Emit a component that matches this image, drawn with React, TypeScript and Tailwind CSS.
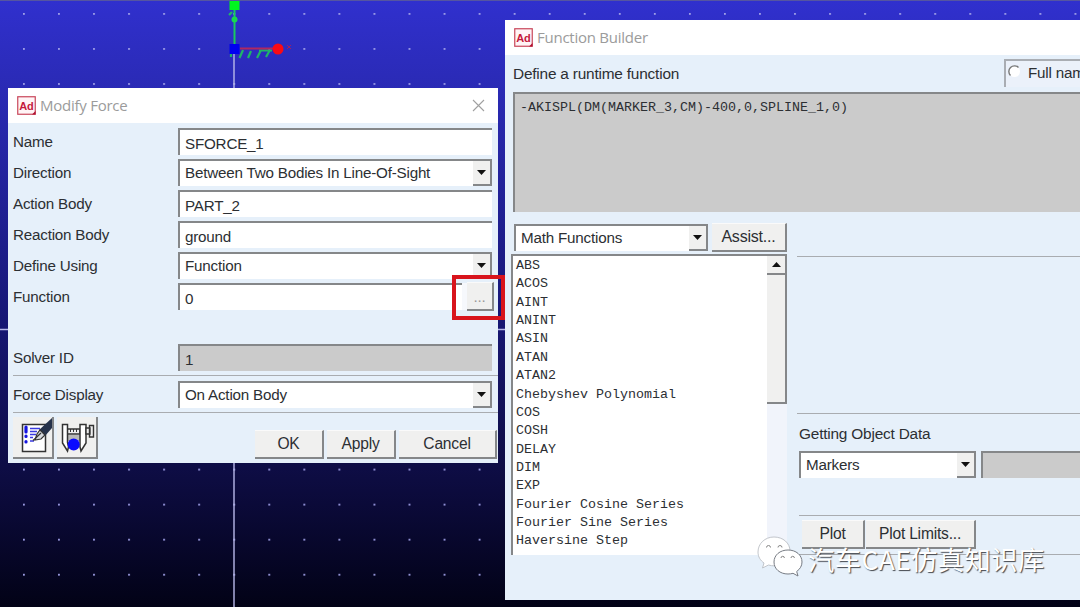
import React, { useState } from 'react';

const mathFunctions = [
  'ABS',
  'ACOS',
  'AINT',
  'ANINT',
  'ASIN',
  'ATAN',
  'ATAN2',
  'Chebyshev Polynomial',
  'COS',
  'COSH',
  'DELAY',
  'DIM',
  'EXP',
  'Fourier Cosine Series',
  'Fourier Sine Series',
  'Haversine Step',
];

function AdamsIcon() {
  return (
    <svg className="w-[19px] h-[19px] shrink-0" viewBox="0 0 19 19">
      <rect x="0.75" y="0.75" width="17.5" height="17.5" fill="#fff4f6" stroke="#c8465a" strokeWidth="1.2" />
      <path d="M18.5 15v3.5H15z" fill="#b01030" />
      <text x="9.3" y="14" textAnchor="middle" fontSize="11" fontWeight="700" fill="#c4183c" fontFamily="Liberation Sans, sans-serif">
        Ad
      </text>
    </svg>
  );
}

function TitleBar({ title, closable }: { title: string; closable?: boolean }) {
  return (
    <div className="h-[35px] shrink-0 bg-white flex items-center pl-[9px] pr-[13px]">
      <AdamsIcon />
      <span className="ml-[4px] text-[15px] tracking-[-0.25px] leading-none text-[#9b9b9b] font-['Open_Sans',sans-serif] whitespace-nowrap">{title}</span>
      {closable && (
        <svg className="ml-auto w-[13px] h-[13px]" viewBox="0 0 13 13">
          <path d="M1 1l11 11M12 1L1 12" stroke="#a0a0a0" strokeWidth="1.1" />
        </svg>
      )}
    </div>
  );
}

function Arrow({ up }: { up?: boolean }) {
  return (
    <svg className="w-[9px] h-[5px]" viewBox="0 0 9 5">
      <path d={up ? 'M0 5L4.5 0L9 5z' : 'M0 0L4.5 5L9 0z'} fill="#111" />
    </svg>
  );
}

function SelectBox({ value, className }: { value: string; className: string }) {
  return (
    <div className={`h-[27px] bg-white border-t-2 border-l-2 border-r-2 border-[#858789] flex ${className}`}>
      <span className="flex-1 pl-[5px] leading-[24px] whitespace-nowrap">{value}</span>
      <span className="w-[17px] h-[25px] bg-[#f0f0ef] border-b-2 border-[#858789] flex items-center justify-center pb-[1px]">
        <Arrow />
      </span>
    </div>
  );
}

function TextBox({ value, className }: { value: string; className: string }) {
  return (
    <div className={`h-[27px] border-t-2 border-l-2 border-[#858789] pl-[5px] leading-[28px] ${className}`}>
      {value}
    </div>
  );
}

function PushButton({ label, className }: { label: string; className: string }) {
  return (
    <button
      className={`h-[29px] bg-[#f0f0ef] border-t border-t-[#fafafa] border-r-2 border-b-2 border-r-[#858789] border-b-[#858789] text-center leading-[26px] whitespace-nowrap ${className}`}
    >
      {label}
    </button>
  );
}

function Row({ label, children }: { label: string; children: React.ReactNode }) {
  return (
    <div className="flex h-[31px] pl-[5px]">
      <span className="w-[165px] leading-[28px] whitespace-nowrap">{label}</span>
      {children}
    </div>
  );
}

function ModifyForce() {
  return (
    <div className="absolute left-[8px] top-[88px] w-[490px] h-[375px] bg-[#e6f0fa] flex flex-col">
      <TitleBar title="Modify Force" closable />
      <div className="pt-[5px]">
        <Row label="Name">
          <TextBox value="SFORCE_1" className="w-[314px] bg-white" />
        </Row>
        <Row label="Direction">
          <SelectBox value="Between Two Bodies In Line-Of-Sight" className="w-[314px]" />
        </Row>
        <Row label="Action Body">
          <TextBox value="PART_2" className="w-[314px] bg-white" />
        </Row>
        <Row label="Reaction Body">
          <TextBox value="ground" className="w-[314px] bg-white" />
        </Row>
        <Row label="Define Using">
          <SelectBox value="Function" className="w-[314px]" />
        </Row>
        <Row label="Function">
          <TextBox value="0" className="w-[284px] bg-white" />
          <div className="w-[5px] h-[27px] bg-[#f6f8fc]" />
          <PushButton label="..." className="w-[27px] -mt-[1px] leading-[28px] text-[#999]" />
        </Row>
      </div>
      <div className="mt-[30px]">
        <Row label="Solver ID">
          <TextBox value="1" className="w-[314px] bg-[#cbcbcb]" />
        </Row>
      </div>
      <div className="ml-[5px] h-px bg-[#a9acb0]" />
      <div className="mt-[5px]">
        <Row label="Force Display">
          <SelectBox value="On Action Body" className="w-[314px]" />
        </Row>
      </div>
      <div className="ml-[5px] h-px bg-[#a9acb0]" />
      <div className="flex mt-[4px] pl-[5px] pr-px">
        <button className="w-[41px] h-[42px] bg-[#f0f0ef] border-r-2 border-b-2 border-[#858789] mr-[3px]">
          <svg className="w-[39px] h-[40px]" viewBox="0 0 39 40">
            <rect x="9.500" y="7.500" width="23" height="27" fill="#fff" stroke="#333" strokeWidth="1.5" />
            <path d="M13 10v5M13 19v.5M13 24.500v.5" stroke="#1414e0" strokeWidth="3.2" strokeLinecap="round" />
            <path d="M17 11.500h10M17 14.500h7M17 17.500h6M17 20.500h3M17 24h4" stroke="#3a3adf" strokeWidth="1.5" />
            <path d="M39 1V11L32 19L26 13z" fill="#26324a" />
            <path d="M27 13l5 5l-4 4l-6 1l2-6z" fill="#d5d8dc" stroke="#333" strokeWidth="1.2" />
            <path d="M28 16L20 23.500" stroke="#333" strokeWidth="1.2" />
          </svg>
        </button>
        <button className="w-[41px] h-[42px] bg-[#f0f0ef] border-r-2 border-b-2 border-[#858789]">
          <svg className="w-[39px] h-[40px]" viewBox="0 0 39 40">
            <path d="M10 12h13v5H10z" fill="#eee" stroke="#333" strokeWidth="1.6" />
            <path d="M13.500 12v3M16.500 12v3M19.500 12v3" stroke="#333" strokeWidth="1" />
            <path d="M10 18h13v6H10z" fill="#b8b8b8" />
            <path d="M5.500 7.500h5v18l1 4.500l-1 4L5.500 26z" fill="#fff" stroke="#333" strokeWidth="1.5" />
            <path d="M23 7.500h6V26l-5 8l-1-4z" fill="#fff" stroke="#333" strokeWidth="1.5" />
            <circle cx="16.700" cy="27.500" r="6" fill="#0a0aff" />
            <path d="M29 11h4v6h-4zM32.500 8.500h4V20h-4z" fill="#eee" stroke="#333" strokeWidth="1.4" />
          </svg>
        </button>
        <div className="flex gap-[3px] ml-auto mt-[13px] text-[15.600px]">
          <PushButton label="OK" className="w-[69px]" />
          <PushButton label="Apply" className="w-[69px]" />
          <PushButton label="Cancel" className="w-[98px]" />
        </div>
      </div>
    </div>
  );
}

function FunctionBuilder() {
  const [selected, setSelected] = useState('');

  return (
    <div className="absolute left-[505px] top-[20px] w-[575px] h-[580px] bg-[#e6f0fa] flex flex-col overflow-hidden">
      <TitleBar title="Function Builder" />
      <div className="flex justify-between h-[37px] shrink-0 pl-[8px] pt-[4px]">
        <span className="leading-[29px] text-[15.400px]">Define a runtime function</span>
        <div className="w-[76px] h-[28px] bg-[#ebf1fa] border-t-2 border-l-2 border-[#a9adb3] flex pl-[2px] overflow-hidden">
          <svg className="w-[13px] h-[13px] mt-[4px] shrink-0" viewBox="0 0 13 13">
            <circle cx="6.500" cy="6.500" r="5.500" fill="#fff" />
            <path d="M2.500 10.500A5.500 5.500 0 0 1 10.500 2.500" fill="none" stroke="#777" strokeWidth="1.4" />
          </svg>
          <span className="ml-[7px] leading-[24px] whitespace-nowrap">Full names</span>
        </div>
      </div>

      <div className="ml-[8px] h-[120px] shrink-0 bg-[#cbcbcb] border-t-2 border-l-2 border-[#858789] pl-[5px] pt-[6px] font-['Liberation_Mono',monospace] text-[13.330px] tracking-normal leading-[16px]">
        -AKISPL(DM(MARKER_3,CM)-400,0,SPLINE_1,0)
      </div>

      <div className="flex flex-1">
        <div className="w-[282px] pl-[6px] pt-[11px]">
          <div className="flex pl-[3px]">
            <SelectBox value="Math Functions" className="w-[194px] mt-[1px]" />
            <PushButton label="Assist..." className="w-[75px] ml-[4px] text-[16px]" />
          </div>
          <div className="flex w-[276px] h-[301px] mt-[2px] bg-white border-t-2 border-l-2 border-[#858789]">
            <ul className="flex-1 pl-[3px] font-['Liberation_Mono',monospace] text-[13.330px] tracking-normal">
              {mathFunctions.map((fn) => (
                <li
                  key={fn}
                  className={`h-[18.370px] leading-[19px] whitespace-nowrap ${selected === fn ? 'bg-blue-200' : ''}`}
                  onClick={() => setSelected(fn)}
                >
                  {fn}
                </li>
              ))}
            </ul>
            <div className="w-[20px] bg-[#f1f4fb]">
              <div className="h-[19px] bg-[#f0f0ef] border-b-2 border-r-2 border-[#858789] flex items-center justify-center">
                <Arrow up />
              </div>
              <div className="h-[129px] bg-[#f0f0ef] border-b-2 border-r-2 border-[#858789]" />
            </div>
          </div>
        </div>

        <div className="flex-1 pl-[10px] pt-[44px]">
          <div className="h-px bg-[#a9acb0]" />
          <div className="h-px mt-[156px] bg-[#a9acb0]" />
          <p className="pl-[2px] mt-[10px] leading-[20px] text-[15.400px]">Getting Object Data</p>
          <div className="flex pl-[2px] mt-[7px]">
            <SelectBox value="Markers" className="w-[177px]" />
            <div className="flex-1 h-[27px] ml-[5px] bg-[#cbcbcb] border-t-2 border-l-2 border-[#858789]" />
          </div>
          <div className="h-px ml-[2px] mt-[37px] bg-[#a9acb0]" />
          <div className="flex pl-[5px] mt-[4px] text-[15.600px]">
            <PushButton label="Plot" className="w-[63px]" />
            <PushButton label="Plot Limits..." className="w-[110px] ml-[1px]" />
          </div>
          <div className="h-px ml-[2px] mt-[5px] bg-[#a9acb0]" />
        </div>
      </div>
    </div>
  );
}

function Workspace() {
  return (
    <svg className="absolute inset-0 w-[1080px] h-[607px]" viewBox="0 0 1080 607">
      <defs>
        <linearGradient id="sky" x1="0" y1="0" x2="0" y2="1">
          <stop offset="0" stopColor="#3030ce" />
          <stop offset="0.15" stopColor="#2a2ab4" />
          <stop offset="0.5" stopColor="#18187a" />
          <stop offset="0.77" stopColor="#0e0d45" />
          <stop offset="1" stopColor="#020216" />
        </linearGradient>
        <pattern id="grid" x="23" y="13" width="35.050" height="35.050" patternUnits="userSpaceOnUse">
          <rect width="1.8" height="1.8" fill="#a0a0e8" />
        </pattern>
      </defs>
      <rect width="1080" height="607" fill="url(#sky)" />
      <rect width="1080" height="607" fill="url(#grid)" />
      <rect width="1080" height="1" fill="#5555a0" />
      <path d="M234 52V607M0 329.500H505" stroke="#b8b8ea" strokeWidth="1.4" />
      {/* ground marker triad */}
      <path d="M234.500 8V46" stroke="#18c860" strokeWidth="2" />
      <path d="M229 15l3-3M231 57v-4M239.500 58l3.500-8M248 58l3-7M257 58l4-8M266 57l4-7M259 50.500h13" stroke="#20b468" strokeWidth="2.2" fill="none" />
      <path d="M240 48.500H274" stroke="#b02860" strokeWidth="2" />
      <path d="M287 45l4 4M291 45l-4 4" stroke="#a02060" strokeWidth="1" />
      <rect x="229.500" y="1" width="10" height="9" fill="#00f51e" />
      <circle cx="234.500" cy="19.500" r="3" fill="#18d850" />
      <rect x="229.500" y="44" width="10" height="10" fill="#0000f0" />
      <circle cx="278" cy="49" r="5.500" fill="#fa0a14" />
    </svg>
  );
}

function Watermark() {
  return (
    <div className="absolute left-[757px] top-[535px] flex">
      <svg className="w-[46px] h-[42px]" viewBox="0 0 46 42">
        <path
          d="M17 2C8 2 1 8.500 1 17c0 5 2.500 8.500 6 11l-1.500 5l6-3c2 .7 4 .8 6 .8C26 30 33 24 33 16S26 2 17 2z"
          fill="#fff"
          stroke="#b4b8be"
          strokeWidth="0.8"
        />
        <path
          d="M31 15c-8 0-14 5-14 12s6 12 14 12c2 0 3.500-.3 5-.7l5 2.700l-1.300-4.500C43 34 45 31 45 27c0-7-6-12-14-12z"
          fill="#fff"
          stroke="#777c84"
          strokeWidth="1"
        />
        <path d="M9.500 12.500a2 2 0 0 1 4 0M21 12.500a2 2 0 0 1 4 0M24 23a1.700 1.700 0 0 1 3.400 0M34 23a1.700 1.700 0 0 1 3.400 0" fill="none" stroke="#888" />
      </svg>
      <span className="ml-[5px] mt-[5px] text-[26.300px] tracking-[0.450px] leading-[38px] text-white font-normal whitespace-nowrap font-['Noto_Sans_CJK_SC',sans-serif] [text-shadow:1px_1px_1px_#44484e]">
        汽车CAE仿真知识库
      </span>
    </div>
  );
}

export default function App() {
  return (
    <main className="relative w-[1080px] h-[607px] overflow-hidden text-[15.200px] tracking-[-0.2px] text-[#2c2f33] font-['Liberation_Sans',sans-serif]">
      <Workspace />
      <ModifyForce />
      <div className="absolute left-[452px] top-[275px] w-[53px] h-[45px] border-4 border-[#d8141c]" />
      <FunctionBuilder />
      <Watermark />
    </main>
  );
}
